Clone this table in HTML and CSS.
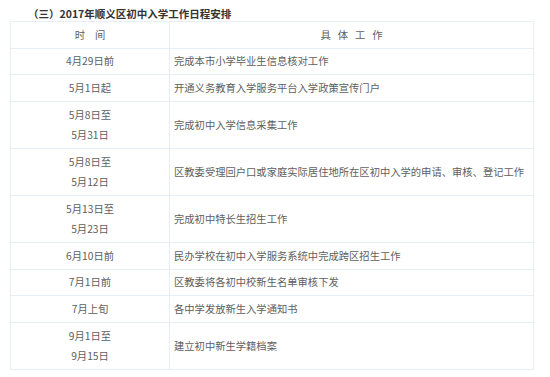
FILE: index.html
```html
<!DOCTYPE html>
<html lang="zh-CN">
<head>
<meta charset="utf-8">
<title>2017年顺义区初中入学工作日程安排</title>
<link rel="stylesheet" href="styles.css">
</head>
<body>
<div class="page">
  <h3 class="title">（三）2017年顺义区初中入学工作日程安排</h3>
  <table class="schedule">
    <thead>
      <tr>
        <th class="col-time"><span class="sp-time">时间</span></th>
        <th class="col-task"><span class="sp-task">具体工作</span></th>
      </tr>
    </thead>
    <tbody>
      <tr><td class="time">4月29日前</td><td class="task">完成本市小学毕业生信息核对工作</td></tr>
      <tr><td class="time">5月1日起</td><td class="task">开通义务教育入学服务平台入学政策宣传门户</td></tr>
      <tr><td class="time">5月8日至<br>5月31日</td><td class="task">完成初中入学信息采集工作</td></tr>
      <tr><td class="time">5月8日至<br>5月12日</td><td class="task">区教委受理回户口或家庭实际居住地所在区初中入学的申请、审核、登记工作</td></tr>
      <tr><td class="time">5月13日至<br>5月23日</td><td class="task">完成初中特长生招生工作</td></tr>
      <tr><td class="time">6月10日前</td><td class="task">民办学校在初中入学服务系统中完成跨区招生工作</td></tr>
      <tr><td class="time">7月1日前</td><td class="task">区教委将各初中校新生名单审核下发</td></tr>
      <tr><td class="time">7月上旬</td><td class="task">各中学发放新生入学通知书</td></tr>
      <tr><td class="time">9月1日至<br>9月15日</td><td class="task">建立初中新生学籍档案</td></tr>
    </tbody>
  </table>
</div>
</body>
</html>
```

FILE: styles.css
```css
html, body {
  margin: 0;
  padding: 0;
  background: #ffffff;
}

.page {
  padding: 7px 0 0 10px;
  font-family: "Noto Sans CJK SC", "Noto Sans", sans-serif;
  color: #606060;
}

.title {
  margin: 0 0 0 18px;
  font-size: 10.5px;
  line-height: 14px;
  font-weight: bold;
  color: #333333;
}

.schedule {
  width: 524px;
  border-collapse: collapse;
  font-size: 10.3px;
  line-height: 20.3px;
}

.schedule th,
.schedule td {
  border: 1px solid #e8eef6;
  padding: 2.7px 4px;
  font-weight: normal;
  vertical-align: middle;
}

.col-time {
  width: 150px;
  text-align: center;
}

.col-task {
  text-align: center;
}

.sp-time {
  letter-spacing: 10px;
  padding-left: 10px;
}

.sp-task {
  letter-spacing: 7px;
  padding-left: 7px;
}

.time {
  text-align: center;
}

.task {
  text-align: left;
}
```
